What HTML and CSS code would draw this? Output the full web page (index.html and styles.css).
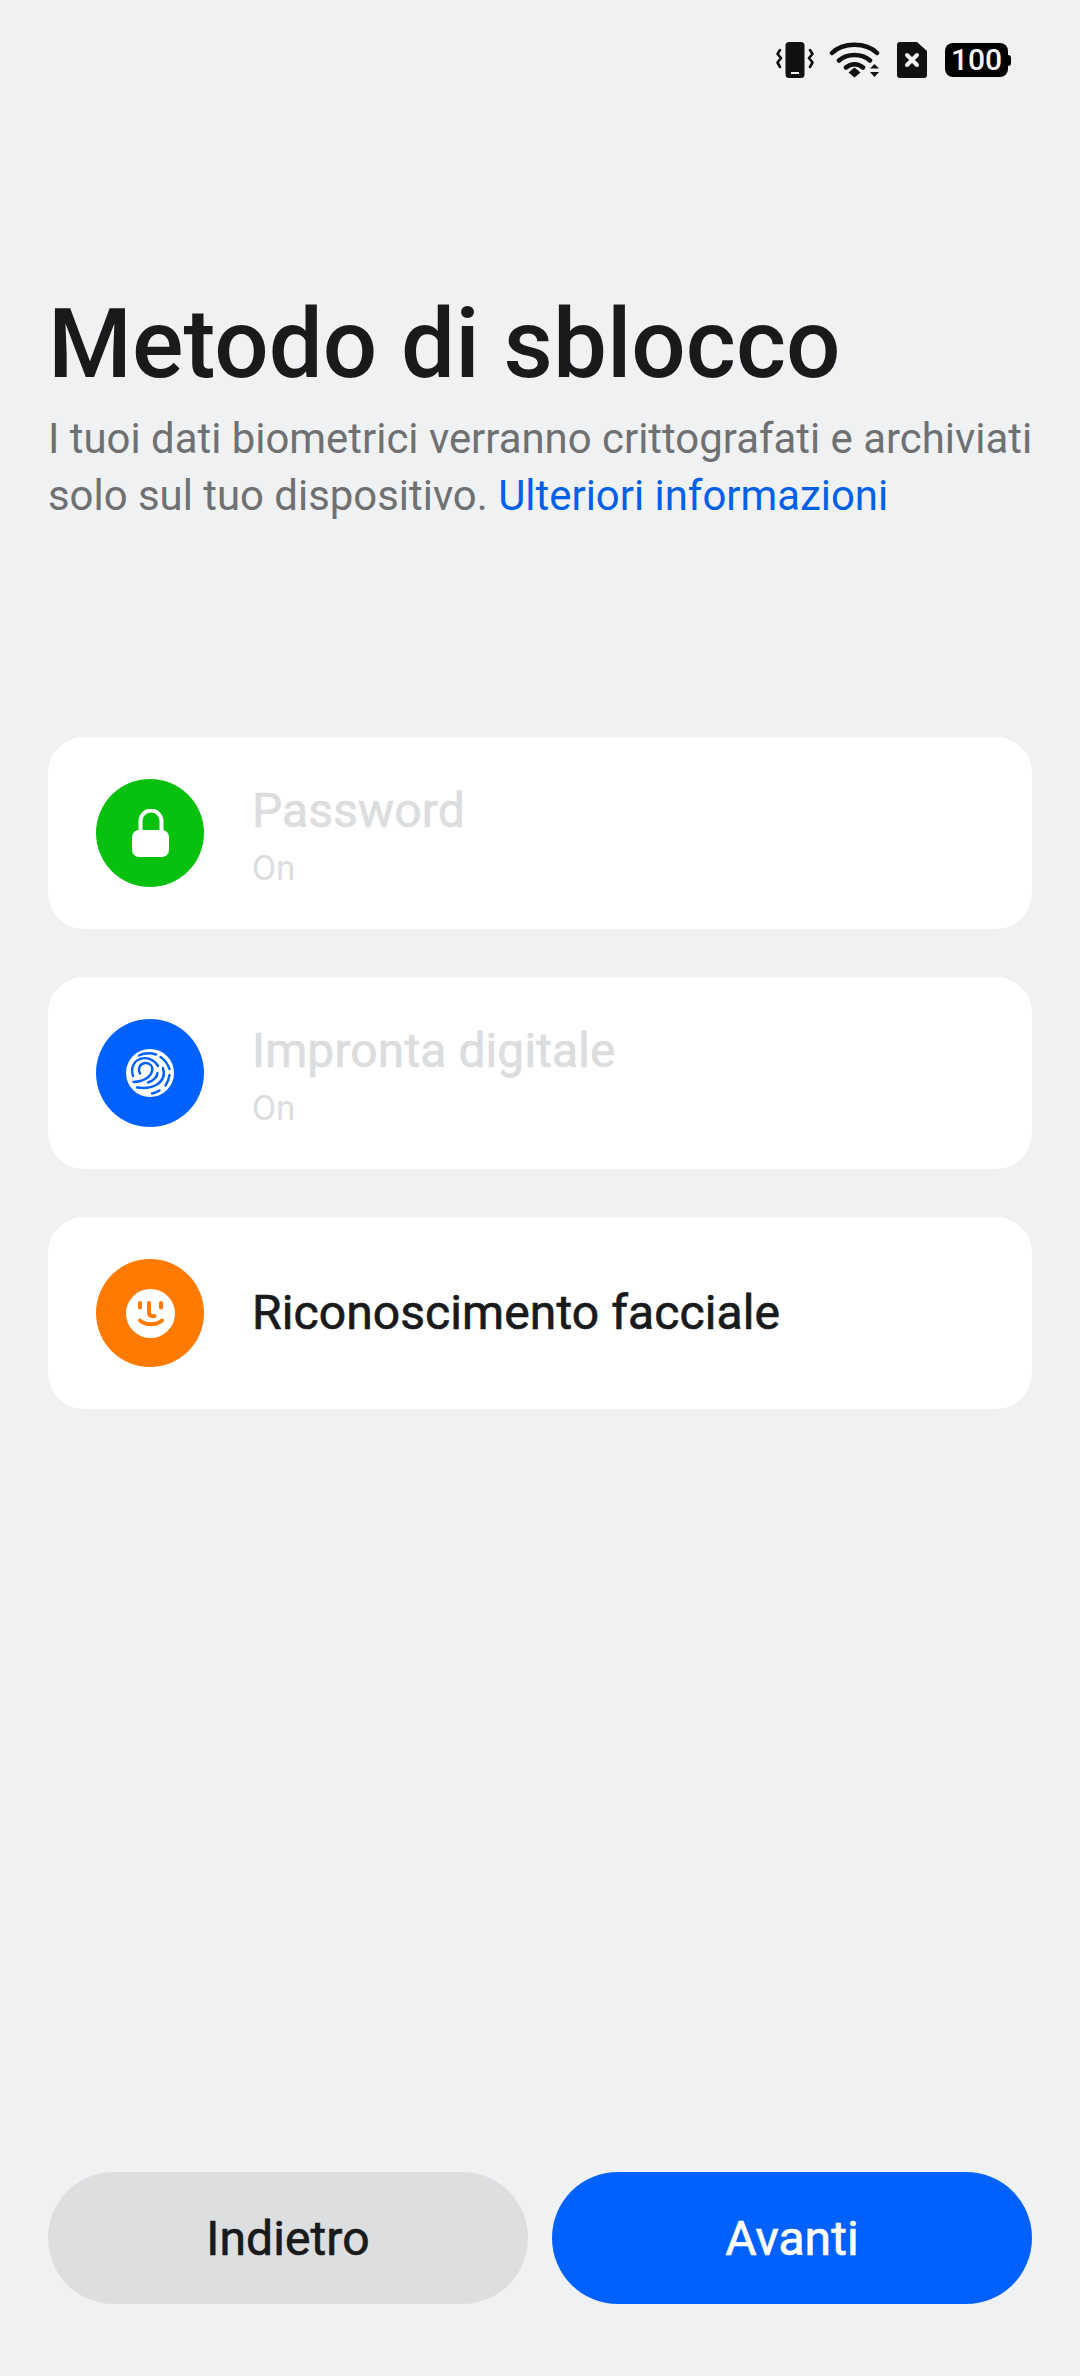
FILE: index.html
```html
<!DOCTYPE html>
<html lang="it">
<head>
<meta charset="utf-8">
<title>Metodo di sblocco</title>
<link rel="stylesheet" href="styles.css">
</head>
<body>
<div class="page">
  <div class="status">
    <svg class="ic-vib" viewBox="0 0 38 38" width="38" height="38"><rect x="9.5" y="1" width="19" height="36" rx="3.5" fill="#111"/><rect x="15" y="31" width="8" height="2" fill="#f0f1f3"/><path d="M4 9l-2.5 4L5 17l-3.5 4.5L4 26M34 9l2.5 4L33 17l3.5 4.5L34 26" fill="none" stroke="#111" stroke-width="2.6" stroke-linecap="round" stroke-linejoin="round"/></svg>
    <svg class="ic-wifi" viewBox="0 0 52 38" width="52" height="38"><path d="M3 12C14 1 37 1 48 12M10 19.5C18 12 33 12 41 19.5M17 26.5C22 22 29 22 34 26.5" fill="none" stroke="#111" stroke-width="4.5" stroke-linecap="round"/><path d="M19.5 31.5L25.5 26.5L31.5 31.5L25.5 36.5Z" fill="#111"/><path d="M41 27.5L45.5 23L50 27.5ZM41 31L50 31L45.5 36Z" fill="#111"/></svg>
    <svg class="ic-sim" viewBox="0 0 30 36" width="30" height="36"><path d="M3 0H20L30 9V33a3 3 0 0 1-3 3H3a3 3 0 0 1-3-3V3a3 3 0 0 1 3-3Z" fill="#111"/><path d="M10 13l10 10M20 13L10 23" stroke="#f0f1f3" stroke-width="4" stroke-linecap="round"/></svg>
    <div class="battery"><span class="bat-body">100</span><span class="bat-tip"></span></div>
  </div>

  <header class="head">
    <h1 class="title">Metodo di sblocco</h1>
    <p class="desc">I tuoi dati biometrici verranno crittografati e archiviati solo sul tuo dispositivo. <a class="link">Ulteriori informazioni</a></p>
  </header>

  <main class="list">
    <div class="card">
      <div class="badge green">
        <svg viewBox="0 0 48 48" width="48" height="48"><path d="M14.5 22V12a10.5 10.5 0 0 1 21 0V22" fill="none" stroke="#fff" stroke-width="4"/><rect x="6" y="21" width="37" height="27" rx="7" fill="#fff"/></svg>
      </div>
      <div class="text">
        <div class="name off">Password</div>
        <div class="sub">On</div>
      </div>
    </div>
    <div class="card">
      <div class="badge blue">
        <svg viewBox="0 0 48 48" width="48" height="48"><circle cx="24" cy="24" r="24" fill="#fff"/><g fill="none" stroke="#0061ff" stroke-width="2.4" stroke-linecap="round"><path d="M13 6.5C18 4 25 4 30 5.5"/><path d="M34.5 8C39 11 42 15.5 43.5 20"/><path d="M43.5 26C43 30 41.5 33.5 39.5 36.5"/><path d="M33.5 41.5C31 43 28.5 44 26 44.5"/><path d="M7 27C4.5 19 7.5 12.5 14 10C21 7.5 28 10.5 32 17"/><path d="M14 24.5C11.5 19.5 14 14.5 19 14C24.5 13.5 27.5 18 26 22.5C24.5 27 20 30 16 31.5C13 32.5 10 33 7.5 33"/><path d="M37 19C39 26 36.5 32 31 35.5C26 38.5 18 39.5 11 38.5"/><path d="M31.5 24C31 28 27.5 31.5 22 33.5"/></g></svg>
      </div>
      <div class="text">
        <div class="name off">Impronta digitale</div>
        <div class="sub">On</div>
      </div>
    </div>
    <div class="card">
      <div class="badge orange">
        <svg viewBox="0 0 49 49" width="49" height="49"><circle cx="24.5" cy="24.5" r="24.5" fill="#fff"/><g fill="none" stroke="#ff7a00" stroke-width="4" stroke-linecap="round"><path d="M14 14V18.5"/><path d="M35 14V18.5"/><path d="M23 14V24C23 26.5 25.5 27.5 28.5 27"/><path d="M14 31.5C20 36.5 30 36.5 36 31.5"/></g></svg>
      </div>
      <div class="text">
        <div class="name">Riconoscimento facciale</div>
      </div>
    </div>
  </main>

  <footer class="actions">
    <button class="btn back">Indietro</button>
    <button class="btn next">Avanti</button>
  </footer>
</div>
</body>
</html>
```
FILE: styles.css
```css
* { box-sizing: border-box; }
html, body { margin: 0; padding: 0; }
body {
  width: 1080px;
  height: 2376px;
  background: #f0f1f3;
  font-family: Roboto, "Noto Sans", sans-serif;
  overflow: hidden;
}
.page {
  height: 2376px;
  display: flex;
  flex-direction: column;
  padding: 0 48px;
}
.status {
  height: 38px;
  margin-top: 41px;
  padding-right: 21px;
  display: flex;
  align-items: center;
  justify-content: flex-end;
}
.status svg { display: block; }
.ic-wifi { margin-left: 15px; }
.ic-sim { margin-left: 16px; }
.battery { display: flex; align-items: center; margin-left: 18px; }
.bat-body {
  width: 63px;
  height: 34px;
  background: #000;
  color: #f4f4f4;
  border-radius: 8px;
  font-size: 30px;
  line-height: 34px;
  font-weight: 500;
  text-align: center;
}
.bat-tip {
  width: 3px;
  height: 11px;
  background: #000;
  border-radius: 0 3px 3px 0;
}
.head { margin-top: 209px; }
.title {
  margin: 0;
  font-size: 96px;
  line-height: 112px;
  font-weight: 500;
  color: #181a1c;
}
.desc {
  margin: 10px -6px 0 0;
  font-size: 41.9px;
  line-height: 57px;
  color: #6e7072;
}
.link { color: #0061e6; }
.list {
  margin-top: 213px;
  display: flex;
  flex-direction: column;
  gap: 48px;
}
.card {
  height: 192px;
  background: #fff;
  border-radius: 36px;
  display: flex;
  align-items: center;
  padding-left: 48px;
}
.badge {
  width: 108px;
  height: 108px;
  border-radius: 50%;
  display: flex;
  align-items: center;
  justify-content: center;
  flex: none;
}
.green { background: #08c10f; }
.blue { background: #0061ff; }
.orange { background: #ff7a00; }
.text { margin-left: 48px; }
.name {
  font-size: 48px;
  line-height: 60px;
  font-weight: 400;
  letter-spacing: 0.1px;
  -webkit-text-stroke: 0.7px currentColor;
  color: #181a1c;
}
.name.off { color: #dcddde; margin-top: 4px; }
.sub {
  font-size: 35px;
  line-height: 40px;
  margin-top: 8px;
  color: #dcddde;
}
.actions {
  margin-top: auto;
  margin-bottom: 72px;
  display: flex;
  gap: 24px;
}
.btn {
  flex: 1;
  height: 132px;
  border: 0;
  border-radius: 66px;
  font-family: inherit;
  font-size: 48px;
  font-weight: 400;
  letter-spacing: 0.1px;
  -webkit-text-stroke: 0.7px currentColor;
}
.back { background: #dddee0; color: #181a1c; }
.next { background: #0061ff; color: #fff; }
```
